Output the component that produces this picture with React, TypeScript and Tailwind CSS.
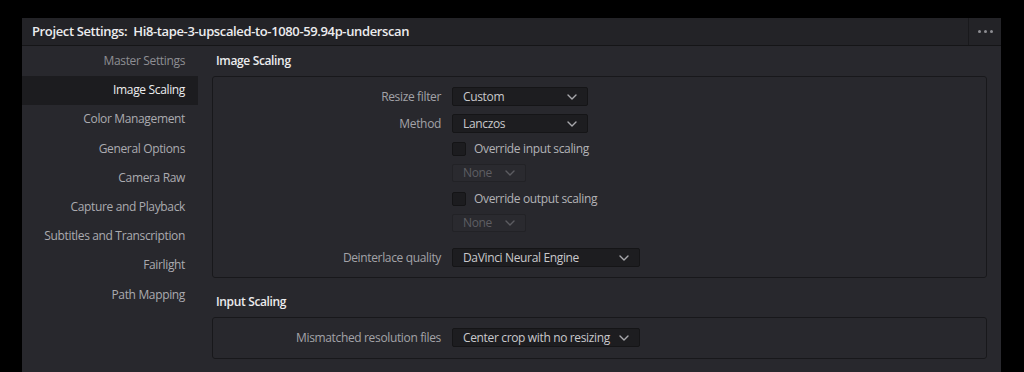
import React from "react";

const font = { fontFamily: '"Open Sans", "Noto Sans", sans-serif' };

function Chevron() {
  return (
    <svg width="10" height="6" viewBox="0 0 10 6" className="shrink-0">
      <path d="M1 1 L5 5 L9 1" fill="none" stroke="#a8a8ac" strokeWidth="1.4" strokeLinecap="round" strokeLinejoin="round" />
    </svg>
  );
}

function Dropdown({ value, w, disabled }: { value: string; w: string; disabled?: boolean }) {
  return (
    <div
      className={
        "flex items-center justify-between pl-[10px] pr-[10px] rounded-[2px] border h-full " +
        w +
        (disabled
          ? " bg-[#2a2a2f] border-[#222226] text-[#5e5e63]"
          : " bg-[#1d1d20] border-[#151517] text-[#c9c9cc]")
      }
    >
      <span className="text-[12px] leading-none whitespace-nowrap tracking-[-0.35px]">{value}</span>
      <span className={disabled ? "opacity-40" : ""}>
        <Chevron />
      </span>
    </div>
  );
}

function Row({ label, children, cls }: { label?: string; children: React.ReactNode; cls: string }) {
  return (
    <div className={"flex items-center " + cls}>
      <div className="w-[239px] shrink-0 text-right text-[12px] text-[#a3a3a8] pr-[11px] leading-none whitespace-nowrap tracking-[-0.35px]">
        {label}
      </div>
      <div className="h-full flex items-center">{children}</div>
    </div>
  );
}

function Check({ label }: { label: string }) {
  return (
    <div className="flex items-center gap-[8px]">
      <div className="w-[14px] h-[14px] rounded-[2px] bg-[#1c1c1f] border border-[#141416]" />
      <span className="text-[12px] text-[#b3b3b7] leading-none tracking-[-0.35px]">{label}</span>
    </div>
  );
}

const items = [
  "Master Settings",
  "Image Scaling",
  "Color Management",
  "General Options",
  "Camera Raw",
  "Capture and Playback",
  "Subtitles and Transcription",
  "Fairlight",
  "Path Mapping",
];

export default function App() {
  return (
    <div className="w-[1024px] h-[372px] bg-black pt-[18px] pl-[22px] overflow-hidden" style={font}>
      <div className="w-[979px] h-[354px] bg-[#28282d] flex flex-col">
        <div className="h-[28px] flex items-center bg-[#232327] border-b border-[#151517] shrink-0">
          <div className="flex-1 pl-[10px] text-[13px] font-semibold text-[#ececee] whitespace-pre tracking-[-0.37px]">
            Project Settings:  Hi8-tape-3-upscaled-to-1080-59.94p-underscan
          </div>
          <div className="w-[33px] h-full border-l border-[#19191c] flex items-center justify-center gap-[3px]">
            <div className="w-[3px] h-[3px] rounded-full bg-[#8d8d92]" />
            <div className="w-[3px] h-[3px] rounded-full bg-[#8d8d92]" />
            <div className="w-[3px] h-[3px] rounded-full bg-[#8d8d92]" />
          </div>
        </div>
        <div className="flex flex-1">
          <div className="w-[176px] shrink-0 pt-[0.5px]">
            {items.map((it, i) => (
              <div
                key={it}
                className={
                  "h-[29.2px] flex items-center justify-end pr-[13px] text-[12px] tracking-[-0.35px] " +
                  (i === 1
                    ? "bg-[#1c1c1f] text-[#ededef]"
                    : i === 0
                    ? "text-[#8e8e93]"
                    : "text-[#ababb0]")
                }
              >
                {it}
              </div>
            ))}
          </div>
          <div className="flex-1 pl-[14px] pr-[14px]">
            <div className="h-[30px] flex items-center pl-[4px] text-[12px] font-semibold text-[#ececee] tracking-[-0.35px]">
              Image Scaling
            </div>
            <div className="border border-[#18181b] rounded-[3px] pt-[10px] pb-[10px]">
              <Row label="Resize filter" cls="h-[19px]">
                <Dropdown value="Custom" w="w-[136px]" />
              </Row>
              <Row label="Method" cls="h-[19px] mt-[8px]">
                <Dropdown value="Lanczos" w="w-[136px]" />
              </Row>
              <Row cls="h-[19px] mt-[6px]">
                <Check label="Override input scaling" />
              </Row>
              <Row cls="h-[18px] mt-[6px]">
                <Dropdown value="None" w="w-[74px]" disabled />
              </Row>
              <Row cls="h-[19px] mt-[7px]">
                <Check label="Override output scaling" />
              </Row>
              <Row cls="h-[18px] mt-[6px]">
                <Dropdown value="None" w="w-[74px]" disabled />
              </Row>
              <Row label="Deinterlace quality" cls="h-[19px] mt-[16px]">
                <Dropdown value="DaVinci Neural Engine" w="w-[188px]" />
              </Row>
            </div>
            <div className="h-[39px] flex items-end pb-[6px] pl-[4px] text-[12px] font-semibold text-[#ececee] tracking-[-0.35px]">
              Input Scaling
            </div>
            <div className="border border-[#18181b] rounded-[3px] pt-[10px] pb-[11px]">
              <Row label="Mismatched resolution files" cls="h-[19px]">
                <Dropdown value="Center crop with no resizing" w="w-[188px]" />
              </Row>
            </div>
          </div>
        </div>
      </div>
    </div>
  );
}
